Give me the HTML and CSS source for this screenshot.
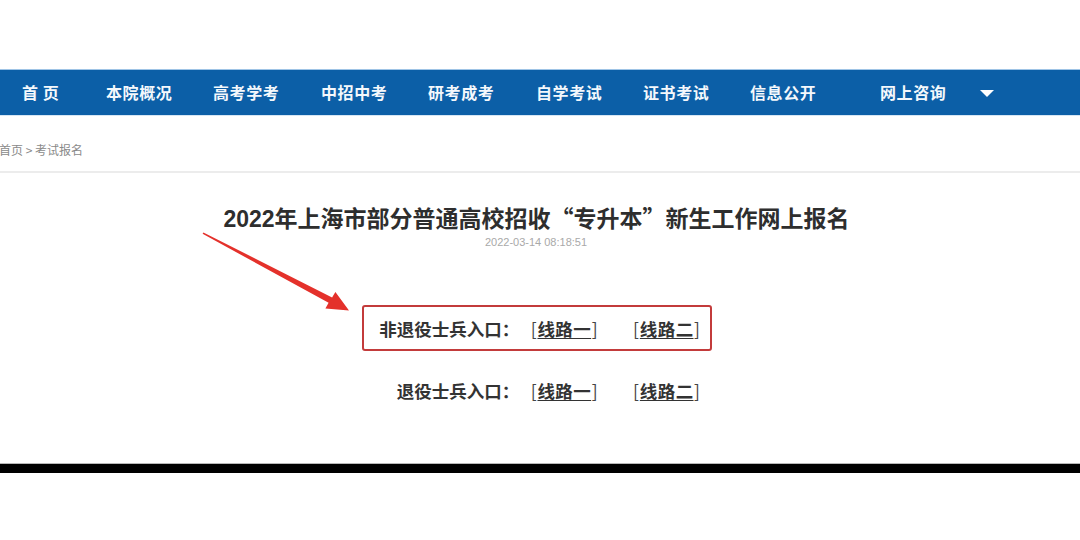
FILE: index.html
```html
<!DOCTYPE html>
<html lang="zh-CN">
<head>
<meta charset="utf-8">
<title>考试报名</title>
<link rel="stylesheet" href="styles.css">
</head>
<body>
<div class="page">
  <div class="topgap"></div>
  <nav class="nav">
    <a class="nav-item">首 页</a>
    <a class="nav-item">本院概况</a>
    <a class="nav-item">高考学考</a>
    <a class="nav-item">中招中考</a>
    <a class="nav-item">研考成考</a>
    <a class="nav-item">自学考试</a>
    <a class="nav-item">证书考试</a>
    <a class="nav-item">信息公开</a>
    <a class="nav-item">网上咨询</a>
    <span class="nav-caret"></span>
  </nav>
  <div class="crumb">首页 &gt; 考试报名</div>
  <div class="article">
    <h1 class="title">2022年上海市部分普通高校招收<span class="cjk">“</span>专升本<span class="cjk">”</span>新生工作网上报名</h1>
    <div class="date">2022-03-14 08:18:51</div>
    <div class="entries">
      <div class="entry boxed">
        <span class="label">非退役士兵入口：</span>
        <a class="link"><span class="br">[</span><u>线路一</u><span class="br">]</span></a>
        <a class="link"><span class="br">[</span><u>线路二</u><span class="br">]</span></a>
      </div>
      <div class="entry plain">
        <span class="label">退役士兵入口：</span>
        <a class="link"><span class="br">[</span><u>线路一</u><span class="br">]</span></a>
        <a class="link"><span class="br">[</span><u>线路二</u><span class="br">]</span></a>
      </div>
    </div>
  </div>
  <div class="blackbar"></div>
  <svg class="arrow" width="1080" height="540" viewBox="0 0 1080 540">
    <polygon points="202.6,233.8 328.6,302.8 325.4,308.6 349,310.5 335.4,292 332.1,297.4 203.4,232.4" fill="#e4312b"/>
  </svg>
</div>
</body>
</html>
```

FILE: styles.css
```css
html, body {
  margin: 0;
  padding: 0;
  background: #ffffff;
}
.page {
  position: relative;
  width: 1080px;
  height: 540px;
  overflow: hidden;
  font-family: "Liberation Sans", "Noto Sans CJK SC", sans-serif;
  color: #333333;
}
.topgap {
  height: 69px;
}
.nav {
  display: grid;
  grid-template-columns: 84px 107px 108px 107px 108px 107px 107px 130px 100px 40px;
  align-items: center;
  height: 45px;
  padding-left: 22px;
  background: #0c5fa7;
  border-top: 1px solid #9fc4e6;
  border-bottom: 1px solid #d6e6f4;
}
.nav-item {
  color: #f4f8fc;
  font-family: "Noto Sans CJK SC", sans-serif;
  font-weight: 700;
  font-size: 16px;
  line-height: 45px;
  letter-spacing: 0.6px;
  white-space: nowrap;
}
.nav-caret {
  width: 0;
  height: 0;
  border-left: 7px solid transparent;
  border-right: 7px solid transparent;
  border-top: 7px solid #ffffff;
  margin-top: 1px;
}
.crumb {
  height: 29px;
  padding-top: 26px;
  line-height: 16px;
  font-family: "Noto Sans CJK SC", sans-serif;
  font-size: 12px;
  color: #8a8a8a;
  border-bottom: 2px solid #ececec;
  margin-left: -1px;
  overflow: hidden;
}
.article {
  display: flex;
  flex-direction: column;
  align-items: center;
}
.title {
  margin: 29px 0 0 0;
  font-size: 23px;
  line-height: 30px;
  font-weight: 700;
  color: #2e2e2e;
  padding-right: 7px;
  white-space: nowrap;
}
.cjk {
  font-family: "Noto Sans CJK SC", sans-serif;
}
.date {
  font-size: 11px;
  line-height: 16px;
  color: #a9a9a9;
  padding-right: 8px;
}
.entries {
  margin-top: 55px;
  display: flex;
  flex-direction: column;
  align-items: flex-end;
  padding-right: 6px;
}
.entry {
  display: flex;
  align-items: center;
  font-family: "Noto Sans CJK SC", sans-serif;
  font-weight: 700;
  font-size: 17.5px;
  color: #333333;
  white-space: nowrap;
}
.boxed {
  height: 42px;
  padding: 0 9px 0 15px;
  border: 2px solid #c33b3b;
  border-radius: 3px;
}
.plain {
  height: 42px;
  margin-top: 18px;
  padding-right: 11px;
}
.label {
  margin-right: 11px;
}
.link {
  font-weight: 700;
  color: #333333;
  letter-spacing: 0.4px;
}
.link .br {
  font-weight: 400;
  color: #444444;
  margin: 0 0.5px;
}
.link + .link {
  margin-left: 34px;
}
.link u {
  text-decoration-thickness: 1px;
  text-underline-offset: 2px;
}
.blackbar {
  margin-top: 52px;
  height: 9px;
  background: #000000;
  border-top: 1px solid #b8b8b8;
}
.arrow {
  position: absolute;
  left: 0;
  top: 0;
  pointer-events: none;
}
```
